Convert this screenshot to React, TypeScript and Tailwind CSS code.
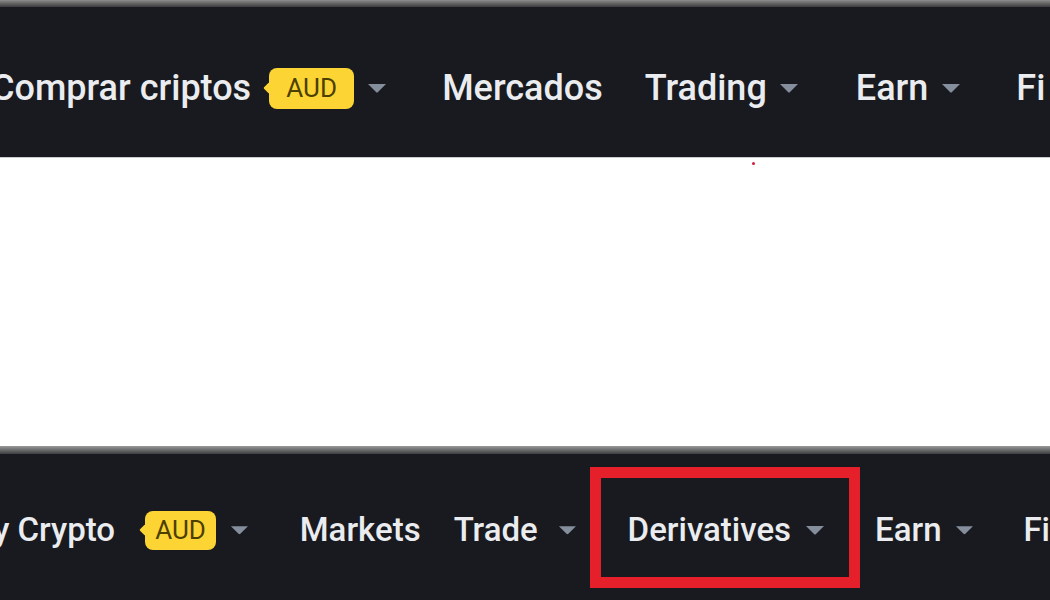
import React from 'react';

function Caret({ className = '' }: { className?: string }) {
  return (
    <svg width="20" height="10" viewBox="0 0 20 10" className={className}>
      <path d="M1 1 H19 L11 9 Q10 10 9 9 Z" fill="#848e9c" />
    </svg>
  );
}

function Badge({ className = '' }: { className?: string }) {
  return (
    <span className={`relative flex items-center justify-center rounded-[8px] bg-[#fcd535] ${className}`}>
      <span className="absolute left-[-4px] top-1/2 h-[8px] w-[8px] -translate-y-1/2 rotate-45 rounded-[1px] bg-[#fcd535]" />
      <span className="relative text-[#4d3f00]">AUD</span>
    </span>
  );
}

export default function App() {
  return (
    <div
      className="flex h-[600px] w-[1050px] flex-col overflow-hidden bg-white"
      style={{ fontFamily: 'Roboto, "Noto Sans", sans-serif' }}
    >
      {/* top edge */}
      <div className="h-[7px] bg-gradient-to-b from-[#8d8d8d] to-[#3c3c3e]" />

      {/* Spanish nav */}
      <div className="flex h-[150px] items-center whitespace-nowrap bg-[#181a20] pt-3 text-[36px] font-medium text-[#eaecef]">
        <span className="ml-[-9px]">Comprar criptos</span>
        <Badge className="ml-[18px] h-[41px] w-[85px] text-[26px] font-normal" />
        <Caret className="ml-[13px]" />
        <span className="ml-[55px]">Mercados</span>
        <span className="ml-[42px]">Trading</span>
        <Caret className="ml-[12px]" />
        <span className="ml-[57px]">Earn</span>
        <Caret className="ml-[13px]" />
        <span className="ml-[55px]">Fi</span>
      </div>
      <div className="h-px bg-[#c9cdd2]" />

      {/* blank page */}
      <div className="relative h-[288px] bg-white">
        <span className="absolute left-[752px] top-[4px] h-[3px] w-[3px] rounded-full bg-[#d01c3c]" />
      </div>

      {/* divider */}
      <div className="h-[8px] bg-gradient-to-b from-[#9a9a9a] to-[#3e3f42]" />

      {/* English nav */}
      <div className="flex flex-1 items-center whitespace-nowrap bg-[#181a20] text-[33px] font-medium text-[#eaecef]">
        <span className="ml-[-46px] pt-[6px]">Buy Crypto</span>
        <Badge className="ml-[30px] mt-[6px] h-[39px] w-[75px] text-[26px] font-normal" />
        <Caret className="ml-[14px] mt-[6px]" />
        <span className="ml-[51px] pt-[6px]">Markets</span>
        <span className="ml-[33px] pt-[6px]">Trade</span>
        <Caret className="ml-[20px] mt-[6px]" />
        <div className="ml-[13px] flex h-[121px] items-center border-[11px] border-[#e5202b] pl-[27px] pr-[24px] pt-[6px]">
          <span>Derivatives</span>
          <Caret className="ml-[14px]" />
        </div>
        <span className="ml-[15px] pt-[6px]">Earn</span>
        <Caret className="ml-[13px] mt-[6px]" />
        <span className="ml-[50px] pt-[6px]">Fi</span>
      </div>
    </div>
  );
}
